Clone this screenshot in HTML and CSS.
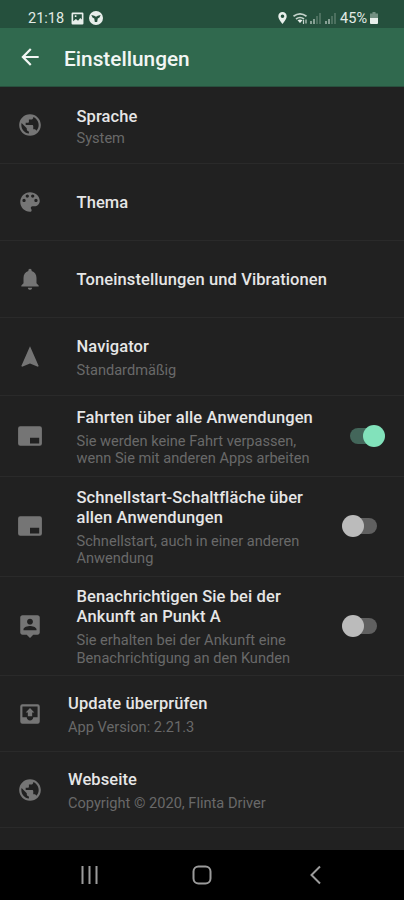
FILE: index.html
```html
<!DOCTYPE html>
<html lang="de">
<head>
  <meta charset="UTF-8" />
  <meta name="viewport" content="width=device-width, initial-scale=1.0"/>
  <title>Einstellungen</title>
  <link rel="stylesheet" href="styles.css">
</head>
<body>

<svg class="sprite" width="0" height="0">
  <symbol id="globe" viewBox="0 0 24 24"><path d="M12 2C6.48 2 2 6.48 2 12s4.48 10 10 10 10-4.480 10-10S17.520 2 12 2zm-1 17.930c-3.950-.49-7-3.850-7-7.930 0-.62.08-1.210.21-1.790L9 15v1c0 1.100.9 2 2 2v1.930zm6.900-2.540c-.26-.81-1-1.390-1.900-1.390h-1v-3c0-.55-.45-1-1-1H8v-2h2c.55 0 1-.45 1-1V7h2c1.100 0 2-.9 2-2v-.41c2.930 1.190 5 4.060 5 7.410 0 2.080-.8 3.970-2.100 5.390z"/></symbol>
  <symbol id="pip" viewBox="0 0 24 24"><path fill-rule="evenodd" d="M3 3h18a2 2 0 0 1 2 2v14a2 2 0 0 1-2 2H3a2 2 0 0 1-2-2V5a2 2 0 0 1 2-2zm9 10.500v5.500h8.500v-5.500z"/></symbol>
</svg>

<header class="statusbar">
  <span class="clock">21:18</span>
  <svg class="s-image" viewBox="0 0 24 24"><path fill-rule="evenodd" d="M3 1h18a2 2 0 0 1 2 2v18a2 2 0 0 1-2 2H3a2 2 0 0 1-2-2V3a2 2 0 0 1 2-2zM4 4v13l5-4 4 3 4-5 3 3V4zm3 2h3v3H7z"/></svg>
  <svg class="s-app" viewBox="0 0 24 24"><circle cx="12" cy="12" r="12"/><path class="cut" d="M4 7l5 1 3 2 3-2 5-1-2 4-3 2-1 6h-4l-1-6-3-2z"/></svg>
  <span class="spacer"></span>
  <svg class="s-pin" viewBox="0 0 14 20"><path fill-rule="evenodd" d="M7 0C3 0 0 3 0 7c0 5 7 13 7 13s7-8 7-13c0-4-3-7-7-7zm0 4a3 3 0 1 1 0 6 3 3 0 0 1 0-6z"/></svg>
  <svg class="s-wifi" viewBox="0 0 16 13"><path class="line" d="M.5 4.300Q7-.5 13.500 4.300M3 7Q7 4 11 7"/><path d="M4.500 8.300Q7 6.500 9.500 8.300L7 11z"/><path class="line thin" d="M10.500 8v4M13 7.500v4"/></svg>
  <svg class="s-signal" viewBox="0 0 13 12"><path d="M1 9h2v3H1zM4 7h2v5H4z"/><path class="dim" d="M7 4h2v8H7zM10 1h2v11h-2z"/></svg>
  <svg class="s-signal" viewBox="0 0 13 12"><path d="M1 9h2v3H1zM4 7h2v5H4z"/><path class="dim" d="M7 4h2v8H7zM10 1h2v11h-2z"/></svg>
  <span class="percent">45%</span>
  <svg class="s-battery" viewBox="0 0 8 12"><path class="dim" d="M2.500 0h3v1.500H8V6H0V1.500h2.500z"/><path d="M0 6h8v5a1 1 0 0 1-1 1H1a1 1 0 0 1-1-1z"/></svg>
</header>

<div class="appbar">
  <svg class="back" viewBox="0 0 24 24"><path d="M20 11H7.830l5.590-5.590L12 4l-8 8 8 8 1.410-1.410L7.830 13H20v-2z"/></svg>
  <h1>Einstellungen</h1>
</div>

<main class="list">
  <div class="row row-language">
    <svg class="icon"><use href="#globe"/></svg>
    <div class="text">
      <div class="title">Sprache</div>
      <div class="sub">System</div>
    </div>
  </div>

  <div class="row row-single">
    <svg class="icon" viewBox="0 0 24 24"><path d="M12 3c-4.970 0-9 4.030-9 9s4.030 9 9 9c.83 0 1.500-.67 1.500-1.500 0-.39-.15-.74-.39-1.010-.23-.26-.38-.61-.38-.99 0-.83.67-1.500 1.500-1.500H16c2.760 0 5-2.240 5-5 0-4.420-4.030-8-9-8zm-5.500 9c-.83 0-1.500-.67-1.500-1.500S5.670 9 6.500 9 8 9.670 8 10.500 7.330 12 6.500 12zm3-4C8.670 8 8 7.330 8 6.500S8.670 5 9.500 5s1.500.67 1.500 1.500S10.330 8 9.500 8zm5 0c-.83 0-1.500-.67-1.500-1.500S13.670 5 14.500 5s1.500.67 1.500 1.500S15.330 8 14.500 8zm3 4c-.83 0-1.500-.67-1.500-1.500S16.670 9 17.500 9s1.500.67 1.500 1.500-.67 1.500-1.500 1.500z"/></svg>
    <div class="text">
      <div class="title">Thema</div>
    </div>
  </div>

  <div class="row row-single">
    <svg class="icon" viewBox="0 0 24 24"><path d="M12 22c1.100 0 2-.9 2-2h-4c0 1.100.89 2 2 2zm6-6v-5c0-3.070-1.640-5.640-4.500-6.320V4c0-.83-.67-1.500-1.500-1.500s-1.500.67-1.500 1.500v.68C7.630 5.360 6 7.920 6 11v5l-2 2v1h16v-1l-2-2z"/></svg>
    <div class="text">
      <div class="title">Toneinstellungen und Vibrationen</div>
    </div>
  </div>

  <div class="row row-navigator">
    <svg class="icon" viewBox="0 0 24 24"><path d="M12 2L4 20.290l.71.71L12 18l7.290 3 .71-.71z"/></svg>
    <div class="text">
      <div class="title">Navigator</div>
      <div class="sub">Standardmäßig</div>
    </div>
  </div>

  <div class="row row-rides">
    <svg class="icon"><use href="#pip"/></svg>
    <div class="text">
      <div class="title">Fahrten über alle Anwendungen</div>
      <div class="sub">Sie werden keine Fahrt verpassen,<br>wenn Sie mit anderen Apps arbeiten</div>
    </div>
    <div class="switch on"></div>
  </div>

  <div class="row row-tall">
    <svg class="icon"><use href="#pip"/></svg>
    <div class="text">
      <div class="title">Schnellstart-Schaltfläche über<br>allen Anwendungen</div>
      <div class="sub">Schnellstart, auch in einer anderen<br>Anwendung</div>
    </div>
    <div class="switch"></div>
  </div>

  <div class="row row-notify">
    <svg class="icon" viewBox="0 0 24 24"><path d="M19 2H5c-1.110 0-2 .9-2 2v14c0 1.100.89 2 2 2h4l3 3 3-3h4c1.100 0 2-.9 2-2V4c0-1.100-.9-2-2-2zm-7 3.300c1.490 0 2.700 1.210 2.700 2.700s-1.210 2.700-2.700 2.700S9.300 9.490 9.300 8s1.210-2.700 2.700-2.700zM18 16H6v-.9c0-2 4-3.100 6-3.100s6 1.100 6 3.100v.9z"/></svg>
    <div class="text">
      <div class="title">Benachrichtigen Sie bei der<br>Ankunft an Punkt A</div>
      <div class="sub">Sie erhalten bei der Ankunft eine<br>Benachrichtigung an den Kunden</div>
    </div>
    <div class="switch"></div>
  </div>

  <div class="row row-info">
    <svg class="icon" viewBox="0 0 24 24"><path fill-rule="evenodd" d="M5 3h14a2 2 0 0 1 2 2v14a2 2 0 0 1-2 2H5a2 2 0 0 1-2-2V5a2 2 0 0 1 2-2zm0 2v10h4c0 1.660 1.350 3 3 3s3-1.340 3-3h4V5z"/><path d="M8 10.500L12 6.500l4 4h-2V14h-4v-3.500z"/></svg>
    <div class="text">
      <div class="title">Update überprüfen</div>
      <div class="sub">App Version: 2.21.3</div>
    </div>
  </div>

  <div class="row row-info">
    <svg class="icon"><use href="#globe"/></svg>
    <div class="text">
      <div class="title">Webseite</div>
      <div class="sub">Copyright © 2020, Flinta Driver</div>
    </div>
  </div>
</main>

<nav class="navbar">
  <svg viewBox="0 0 20 20"><path d="M2.500 1v18M9.500 1v18M16.500 1v18"/></svg>
  <svg viewBox="0 0 20 20"><rect x="1.500" y="1.500" width="17" height="17" rx="5"/></svg>
  <svg viewBox="0 0 20 20"><path d="M15 1.500L6.500 10l8.500 8.500"/></svg>
</nav>

</body>
</html>
```
FILE: styles.css
```css
* {
  box-sizing: border-box;
}

body {
  margin: 0;
  height: 900px;
  display: flex;
  flex-direction: column;
  font-family: Roboto, sans-serif;
  background: #212121;
  color: #e6e6e6;
  overflow: hidden;
}

.sprite {
  display: none;
}

/* status bar */
.statusbar {
  height: 28px;
  padding: 8px 26px 0 28px;
  display: flex;
  align-items: center;
  background: #25503d;
  color: #e3ebe6;
  font-size: 14.5px;
  line-height: 20px;
}

.statusbar svg {
  fill: #e8efeb;
  flex: none;
}

.statusbar .dim {
  opacity: 0.4;
}

.clock,
.percent {
  padding-top: 1px;
}

.clock {
  width: 43px;
}

.spacer {
  flex: 1;
}

.s-image {
  width: 13px;
  height: 13px;
  margin-right: 5px;
}

.s-app {
  width: 14px;
  height: 14px;
}

.statusbar .cut {
  fill: #25503d;
}

.s-pin {
  width: 9px;
  height: 12px;
  margin-right: 6px;
}

.s-wifi {
  width: 16px;
  height: 13px;
}

.s-wifi .line {
  fill: none;
  stroke: #c3d2ca;
  stroke-width: 1.7;
}

.s-wifi .thin {
  stroke-width: 1.2;
}

.s-signal {
  width: 13px;
  height: 12px;
  margin-right: 2px;
  opacity: 0.5;
}

.percent {
  margin-left: 1px;
  margin-right: 3px;
}

.s-battery {
  width: 8px;
  height: 12px;
}

/* app bar */
.appbar {
  height: 59px;
  padding: 0 17px;
  display: flex;
  align-items: center;
  background: #30694e;
  border-bottom: 1px solid #28503e;
}

.back {
  width: 26px;
  height: 26px;
  fill: #f2f6f4;
}

h1 {
  margin: 3px 0 0 21px;
  font-size: 20.8px;
  font-weight: 500;
  line-height: 24px;
  color: #f2f6f4;
}

/* settings list */
.list {
  flex: 1;
}

.row {
  height: 77px;
  padding: 0 27px 0 17px;
  display: flex;
  align-items: center;
  border-bottom: 1px solid #2a2a2a;
}

.icon {
  width: 26px;
  height: 26px;
  margin-right: 33.5px;
  flex: none;
  fill: #757575;
}

.text {
  flex: 1;
  padding-top: 3px;
  white-space: nowrap;
}

.title {
  font-size: 16.5px;
  font-weight: 500;
  line-height: 20px;
  letter-spacing: 0.1px;
}

.sub {
  margin-top: 5px;
  font-size: 14.6px;
  line-height: 17.5px;
  color: #696969;
}

.row-language .text {
  padding-top: 5px;
}

.row-language .sub {
  margin-top: 3px;
}

.row-single .text {
  padding-top: 2px;
}

.row-navigator {
  height: 78px;
}

.row-rides {
  height: 81px;
}

.row-tall {
  height: 100px;
  padding-bottom: 2px;
}

.row-tall .text {
  padding-top: 4px;
}

.row-notify {
  height: 99px;
  padding-bottom: 1px;
}

.row-info {
  height: 76px;
}

.row-info .icon {
  margin-right: 25px;
}

/* switch */
.switch {
  position: relative;
  width: 27px;
  height: 16px;
  flex: none;
  border-radius: 8px;
  background: #606060;
}

.switch::after {
  content: "";
  position: absolute;
  top: -3px;
  left: -8px;
  width: 22px;
  height: 22px;
  border-radius: 50%;
  background: #bbbbbb;
}

.switch.on {
  background: #43665a;
}

.switch.on::after {
  left: 13px;
  background: #82e2bb;
}

/* system navigation */
.navbar {
  height: 50px;
  padding: 0 33px;
  display: grid;
  grid-template-columns: repeat(3, 1fr);
  place-items: center;
  background: #000;
}

.navbar svg {
  width: 20px;
  height: 20px;
  margin-left: 1px;
  fill: none;
  stroke: #9b9b9b;
  stroke-width: 2;
}
```
